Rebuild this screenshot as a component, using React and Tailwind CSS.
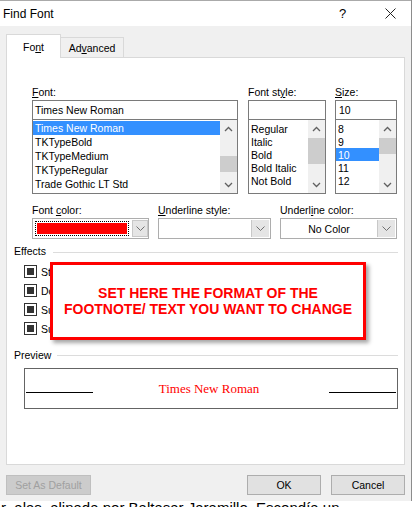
const UpArrow = () => (
  <svg width="9" height="6" viewBox="0 0 9 6">
    <polyline points="1,5 4.5,1.5 8,5" fill="none" stroke="#606060" strokeWidth="1.3" />
  </svg>
);

const DownArrow = () => (
  <svg width="9" height="6" viewBox="0 0 9 6">
    <polyline points="1,1 4.5,4.5 8,1" fill="none" stroke="#606060" strokeWidth="1.3" />
  </svg>
);

const ComboArrow = () => (
  <svg width="9" height="5" viewBox="0 0 9 5">
    <polyline points="0.5,0.5 4.5,4.5 8.5,0.5" fill="none" stroke="#707070" strokeWidth="1" />
  </svg>
);

const ScrollBar = ({ thumb }) => (
  <div className="w-[17px] h-full bg-[#f0f0f0] flex flex-col shrink-0">
    <div className="h-[17px] flex items-center justify-center">
      <UpArrow />
    </div>
    <div className="flex-1">
      <div className={`bg-[#cdcdcd] w-full ${thumb}`} />
    </div>
    <div className="h-[17px] flex items-center justify-center">
      <DownArrow />
    </div>
  </div>
);

const Checkbox = ({ label }) => (
  <div className="h-[19px] flex items-center gap-[4px]">
    <div className="w-[13px] h-[13px] border border-[#333] bg-white flex items-center justify-center">
      <div className="w-[7px] h-[7px] bg-[#333]" />
    </div>
    <span>{label}</span>
  </div>
);

const fonts = ["Times New Roman", "TKTypeBold", "TKTypeMedium", "TKTypeRegular", "Trade Gothic LT Std"];
const styles = ["Regular", "Italic", "Bold", "Bold Italic", "Not Bold"];
const sizes = ["8", "9", "10", "11", "12"];

export default function App() {
  return (
    <div
      className="w-[413px] h-[507px] relative overflow-hidden bg-white text-[10.5px] leading-[14px] text-black"
      style={{ fontFamily: '"Liberation Sans", Arial, sans-serif' }}
    >
      <div className="w-[412px] border-r border-[#8c8c8c]">
        {/* title bar */}
        <div className="h-[26px] bg-white border-t border-[#aaaaaa] flex items-center pl-[3px] text-[12px]">
          <span className="flex-1">Find Font</span>
          <span className="w-[10px] text-[13px] mr-[36px]">?</span>
          <svg width="11" height="11" viewBox="0 0 11 11" className="mr-[15px]">
            <path d="M0.5 0.5 L10.5 10.5 M10.5 0.5 L0.5 10.5" stroke="#222" strokeWidth="1" />
          </svg>
        </div>

        {/* body */}
        <div className="h-[475px] bg-[#f0f0f0] px-[6px] pt-[7px]">
          {/* tabs */}
          <div className="flex items-end h-[24px]">
            <div className="w-[55px] h-[24px] bg-white border border-b-0 border-[#d9d9d9] flex items-center justify-center relative top-[1px]">
              <span>
                Fo<span className="underline">n</span>t
              </span>
            </div>
            <div className="w-[63px] h-[20px] bg-[#f0f0f0] border border-b-0 border-l-0 border-[#d9d9d9] flex items-center justify-center">
              <span>
                Ad<span className="underline">v</span>anced
              </span>
            </div>
          </div>

          {/* panel */}
          <div className="w-[399px] h-[408px] bg-white border border-[#d9d9d9] pl-[7px] pr-[6px] pt-[27px]">
            <div className="ml-[18px] flex">
              <div className="w-[206px] mr-[10px]">
                <div className="h-[15px]">
                  <span className="underline">F</span>ont:
                </div>
                <div className="h-[20px] border border-[#7a7a7a] flex items-center pl-[2px]">Times New Roman</div>
                <div className="h-[74px] border border-t-0 border-[#7a7a7a] flex">
                  <div className="flex-1 pt-[1px]">
                    {fonts.map((f, i) => (
                      <div
                        key={f}
                        className={`h-[14px] pl-[2px] flex items-center ${i === 0 ? "bg-[#3390ff] text-white" : ""}`}
                      >
                        {f}
                      </div>
                    ))}
                  </div>
                  <ScrollBar thumb="mt-[19px] h-[16px]" />
                </div>
              </div>
              <div className="w-[78px] mr-[9px]">
                <div className="h-[15px]">
                  Font st<span className="underline">y</span>le:
                </div>
                <div className="h-[20px] border border-[#7a7a7a]" />
                <div className="h-[74px] border border-t-0 border-[#7a7a7a] flex">
                  <div className="flex-1 pt-[2px]">
                    {styles.map((s) => (
                      <div key={s} className="h-[13px] pl-[2px] flex items-center whitespace-nowrap">
                        {s}
                      </div>
                    ))}
                  </div>
                  <ScrollBar thumb="mt-[1px] h-[26px]" />
                </div>
              </div>
              <div className="w-[62px]">
                <div className="h-[15px]">
                  <span className="underline">S</span>ize:
                </div>
                <div className="h-[20px] border border-[#7a7a7a] flex items-center pl-[3px]">10</div>
                <div className="h-[74px] border border-t-0 border-[#7a7a7a] flex">
                  <div className="flex-1 pt-[2px]">
                    {sizes.map((s) => (
                      <div
                        key={s}
                        className={`h-[13px] pl-[2px] flex items-center ${s === "10" ? "bg-[#3390ff] text-white" : ""}`}
                      >
                        {s}
                      </div>
                    ))}
                  </div>
                  <ScrollBar thumb="mt-[1px] h-[16px]" />
                </div>
              </div>
            </div>

            {/* colours row */}
            <div className="ml-[18px] mt-[9px] flex">
              <div className="w-[117px] mr-[9px]">
                <div className="h-[15px]">
                  Font <span className="underline">c</span>olor:
                </div>
                <div className="h-[21px] border border-[#adadad] flex items-center pl-[2px]">
                  <div className="w-[95px] h-[15px] border border-dotted border-black p-[1px]">
                    <div className="w-full h-full bg-[#ff0000]" />
                  </div>
                  <div className="ml-[3px] w-[16px] h-[17px] bg-[#e5e5e5] border border-[#c8c8c8] flex items-center justify-center">
                    <ComboArrow />
                  </div>
                </div>
              </div>
              <div className="w-[113px] mr-[9px]">
                <div className="h-[15px]">
                  <span className="underline">U</span>nderline style:
                </div>
                <div className="h-[21px] border border-[#adadad] flex items-center justify-end pr-[1px]">
                  <div className="w-[18px] h-[17px] bg-[#e5e5e5] border-l border-[#c8c8c8] flex items-center justify-center">
                    <ComboArrow />
                  </div>
                </div>
              </div>
              <div className="w-[117px]">
                <div className="h-[15px]">
                  Underl<span className="underline">i</span>ne color:
                </div>
                <div className="h-[21px] border border-[#adadad] flex items-center pr-[1px]">
                  <div className="flex-1 text-center">No Color</div>
                  <div className="w-[18px] h-[17px] bg-[#e5e5e5] border-l border-[#c8c8c8] flex items-center justify-center">
                    <ComboArrow />
                  </div>
                </div>
              </div>
            </div>

            {/* effects */}
            <div className="mt-[5px] h-[14px] flex items-center">
              <span>Effects</span>
              <div className="flex-1 ml-[7px] border-t border-[#dcdcdc] mt-[2px]" />
            </div>
            <div className="ml-[10px] mt-[4px]">
              <Checkbox label="Strikethrough" />
              <Checkbox label="Double strikethrough" />
              <Checkbox label="Superscript" />
              <Checkbox label="Subscript" />
            </div>

            {/* preview */}
            <div className="mt-[10px] h-[14px] flex items-center">
              <span>Preview</span>
              <div className="flex-1 ml-[6px] border-t border-[#dcdcdc]" />
            </div>
            <div className="ml-[10px] mt-[6px] h-[41px] border border-[#646464] flex items-center justify-between px-[1px]">
              <div className="w-[67px] border-t border-black mt-[8px]" />
              <span
                className="text-[13px] text-[#ff0000] leading-[16px] mr-[4px]"
                style={{ fontFamily: '"Liberation Serif", "Times New Roman", serif' }}
              >
                Times New Roman
              </span>
              <div className="w-[67px] border-t border-black mt-[8px]" />
            </div>
          </div>

          {/* buttons */}
          <div className="mt-[10px] flex items-center">
            <div className="w-[85px] h-[20px] bg-[#cccccc] border border-[#bfbfbf] text-[#a0a0a0] flex items-center justify-center">
              Set As Default
            </div>
            <div className="flex-1" />
            <div className="w-[74px] h-[20px] bg-[#e1e1e1] border border-[#adadad] flex items-center justify-center">
              OK
            </div>
            <div className="w-[74px] h-[20px] ml-[10px] bg-[#e1e1e1] border border-[#adadad] flex items-center justify-center">
              Cancel
            </div>
          </div>
        </div>
      </div>

      {/* document text behind the dialog */}
      <div className="h-[6px] overflow-visible pl-[1px] whitespace-nowrap text-[15px] leading-[16px] relative top-[-1px]">
        r&nbsp;&nbsp;alas. alinada por Baltasar Jaramillo. Escondía un
      </div>

      {/* annotation overlay */}
      <div className="absolute left-[50px] top-[262px] w-[316px] h-[78px] bg-white border-[3px] border-[#ff0000] shadow-[3px_3px_4px_rgba(0,0,0,0.35)] flex flex-col items-center justify-center">
        <div className="text-[#ff0000] font-bold text-[14px] leading-[16px] text-center">
          SET HERE THE FORMAT OF THE
          <br />
          FOOTNOTE/ TEXT YOU WANT TO CHANGE
        </div>
      </div>
    </div>
  );
}
